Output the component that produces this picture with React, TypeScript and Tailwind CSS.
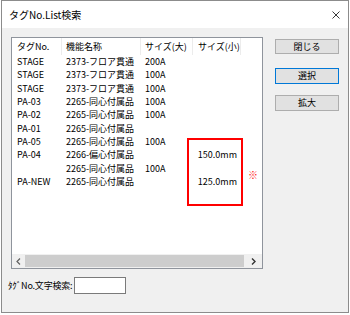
const font = { fontFamily: "'Noto Sans CJK JP', 'Noto Sans', sans-serif" };

type Row = { tag: string; name: string; big: string; small: string };

const rows: Row[] = [
  { tag: "STAGE", name: "2373-フロア貫通", big: "200A", small: "" },
  { tag: "STAGE", name: "2373-フロア貫通", big: "100A", small: "" },
  { tag: "STAGE", name: "2373-フロア貫通", big: "100A", small: "" },
  { tag: "PA-03", name: "2265-同心付属品", big: "100A", small: "" },
  { tag: "PA-02", name: "2265-同心付属品", big: "100A", small: "" },
  { tag: "PA-01", name: "2265-同心付属品", big: "", small: "" },
  { tag: "PA-05", name: "2265-同心付属品", big: "100A", small: "" },
  { tag: "PA-04", name: "2266-偏心付属品", big: "", small: "150.0mm" },
  { tag: "", name: "2265-同心付属品", big: "100A", small: "" },
  { tag: "PA-NEW", name: "2265-同心付属品", big: "", small: "125.0mm" },
];

function Btn({ label, focused }: { label: string; focused?: boolean }) {
  return (
    <div
      className={
        "flex h-[16px] w-[64px] items-center justify-center bg-[#e1e1e1] text-[9px] text-black " +
        (focused ? "border border-[#0078d7]" : "border border-[#adadad]")
      }
    >
      {label}
    </div>
  );
}

export default function App() {
  return (
    <div className="relative h-[315px] w-[350px] bg-white" style={font}>
      <div className="ml-[1px] flex h-[313px] w-[348px] flex-col border border-[#8c8c8c]">
        <div className="flex h-[27px] items-center justify-between bg-white pl-[7px] pr-[8px]">
          <span className="text-[10px] text-black">タグNo.List検索</span>
          <svg width="8" height="8" viewBox="0 0 8 8" className="mt-[1px]">
            <path d="M0.5 0.5 L7.5 7.5 M7.5 0.5 L0.5 7.5" stroke="#222" strokeWidth="0.9" fill="none" />
          </svg>
        </div>
        <div className="flex flex-1 flex-col bg-[#f0f0f0]">
          <div className="flex pl-[9px] pt-[9px]">
            <div className="flex h-[232px] w-[252px] flex-col border border-[#8f949c] bg-white text-[9px] text-black">
              <div className="flex h-[17px] items-center">
                <div className="flex h-full w-[50px] items-center border-r border-[#ececec] pl-[5px]">タグNo.</div>
                <div className="flex h-full w-[79px] items-center border-r border-[#ececec] pl-[4px]">機能名称</div>
                <div className="flex h-full w-[52px] items-center border-r border-[#ececec] pl-[4px]">サイズ(大)</div>
                <div className="flex h-full w-[48px] items-center border-r border-[#ececec] pl-[5px]">サイズ(小)</div>
              </div>
              <div className="flex-1">
                {rows.map((r, i) => (
                  <div key={i} className="flex h-[13.33px] items-center leading-none">
                    <div className="w-[50px] pl-[5px]">{r.tag}</div>
                    <div className="w-[79px] pl-[4px]">{r.name}</div>
                    <div className="w-[52px] pl-[4px]">{r.big}</div>
                    <div className="w-[48px] pr-[4px] text-right">{r.small}</div>
                  </div>
                ))}
              </div>
              <div className="flex h-[14px] items-stretch bg-[#f0f0f0]">
                <div className="flex w-[13px] items-center justify-center">
                  <svg width="5" height="7" viewBox="0 0 5 7">
                    <path d="M4 0.5 L1 3.5 L4 6.5" stroke="#606060" strokeWidth="1.2" fill="none" />
                  </svg>
                </div>
                <div className="my-[1px] flex-1 bg-[#cdcdcd]" />
                <div className="flex w-[18px] items-center justify-center">
                  <svg width="5" height="7" viewBox="0 0 5 7">
                    <path d="M1 0.5 L4 3.5 L1 6.5" stroke="#333" strokeWidth="1.4" fill="none" />
                  </svg>
                </div>
              </div>
            </div>
            <div className="ml-[12px] flex flex-col">
              <div className="mt-[2px] h-[15px] w-[64px] border border-[#adadad] bg-[#e1e1e1] text-center text-[9px] leading-[13px]">閉じる</div>
              <div className="mt-[14px]">
                <Btn label="選択" focused />
              </div>
              <div className="mt-[11px]">
                <Btn label="拡大" />
              </div>
            </div>
          </div>
          <div className="mt-[8px] flex items-center pl-[6px]">
            <span className="text-[9px] tracking-[-0.2px] text-black">ﾀｸﾞNo.文字検索:</span>
            <div className="ml-[2px] h-[17px] w-[52px] border border-[#7a7a7a] bg-white" />
          </div>
        </div>
      </div>
      <div className="absolute left-[187px] top-[138px] h-[68px] w-[56px] border-2 border-[#ff0000]" />
      <div className="absolute left-[248px] top-[167px] text-[10px] text-[#ff2020]">※</div>
    </div>
  );
}
